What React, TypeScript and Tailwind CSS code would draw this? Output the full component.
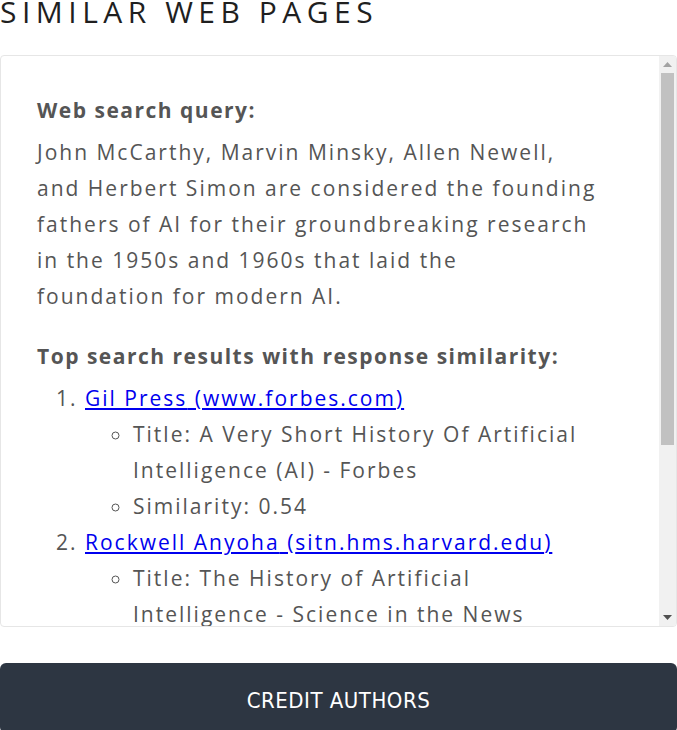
const results = [
  {
    author: "Gil Press",
    site: "www.forbes.com",
    title: "A Very Short History Of Artificial Intelligence (AI) - Forbes",
    similarity: "0.54",
  },
  {
    author: "Rockwell Anyoha",
    site: "sitn.hms.harvard.edu",
    title: "The History of Artificial Intelligence - Science in the News",
    similarity: "0.51",
  },
  {
    author: "Britannica",
    site: "www.britannica.com",
    title: "History of artificial intelligence | Britannica",
    similarity: "0.49",
  },
];

export default function App() {
  return (
    <div className="w-[677px] h-[730px] overflow-hidden bg-white font-['Open_Sans',sans-serif]">
      <h2 className="-mt-[7px] text-[30px] leading-[38px] tracking-[5.5px] text-[#1f1f1f] font-normal">
        SIMILAR WEB PAGES
      </h2>

      <div className="mt-[24px] h-[572px] rounded-[4px] border border-[#e6e6e6] flex overflow-hidden">
        <div className="flex-1 overflow-hidden pl-[36px] pr-[50px] pt-[36px] text-[21px] leading-[36px] tracking-[2px] text-[#555]">
          <p className="font-bold tracking-[1.5px] mb-[6px]">Web search query:</p>
          <p>
            John McCarthy, Marvin Minsky, Allen Newell,
            <br />
            and Herbert Simon are considered the founding
            <br />
            fathers of AI for their groundbreaking research
            <br />
            in the 1950s and 1960s that laid the
            <br />
            foundation for modern AI.
          </p>

          <p className="font-bold tracking-[1.5px] mt-[24px] mb-[6px]">
            Top search results with response similarity:
          </p>
          <ol className="list-decimal pl-[48px]">
            {results.map((r, i) => (
              <li key={i}>
                <a href="#" className="text-[#0000ee] underline">
                  {r.author} ({r.site})
                </a>
                <ul className="list-[circle] pl-[48px]">
                  <li>Title: {r.title}</li>
                  <li>Similarity: {r.similarity}</li>
                </ul>
              </li>
            ))}
          </ol>
        </div>

        <div className="w-[17px] shrink-0 bg-[#f1f1f1] flex flex-col">
          <div className="h-[17px] flex items-center justify-center">
            <svg width="9" height="5" viewBox="0 0 9 5">
              <path d="M0 5 L4.5 0 L9 5 Z" fill="#a3a3a3" />
            </svg>
          </div>
          <div className="flex-1 px-[2px]">
            <div className="h-[372px] bg-[#c1c1c1]" />
          </div>
          <div className="h-[17px] flex items-center justify-center">
            <svg width="9" height="5" viewBox="0 0 9 5">
              <path d="M0 0 L9 0 L4.5 5 Z" fill="#505050" />
            </svg>
          </div>
        </div>
      </div>

      <button className="mt-[36px] w-full h-[70px] rounded-[6px] bg-[#2d3642] text-white text-[22px] pt-[4px] font-['DejaVu_Sans_Condensed','DejaVu_Sans',sans-serif] tracking-[0.5px]">
        CREDIT AUTHORS
      </button>
    </div>
  );
}
